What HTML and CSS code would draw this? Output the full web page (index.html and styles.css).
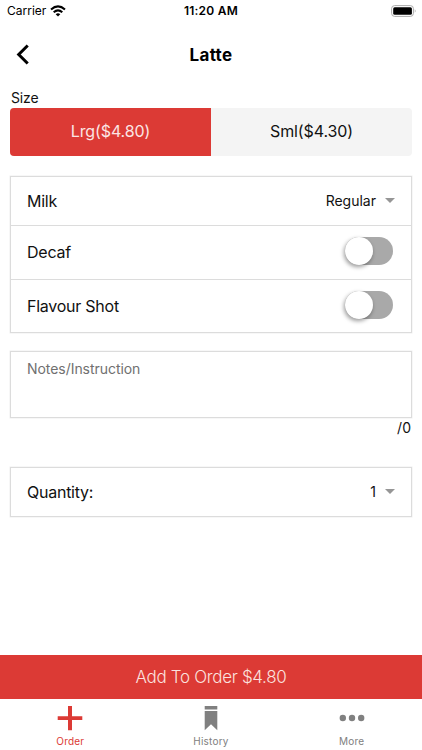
FILE: index.html
```html
<!DOCTYPE html>
<html lang="en">
<head>
<meta charset="utf-8">
<title>Latte</title>
<link rel="stylesheet" href="styles.css">
</head>
<body>
<div class="screen">
  <div class="status">
    <div class="carrier"><span>Carrier</span>
      <svg width="16" height="12" viewBox="0 0 16 12"><g fill="none" stroke="#000" stroke-width="2.1"><path d="M1 4.5Q8-1.6 15 4.5"/><path d="M3.7 7.3Q8 3.6 12.3 7.3"/></g><path d="M5.7 9.2Q8 7.3 10.3 9.2L8 11.5Z"/></svg>
    </div>
    <div class="time">11:20 AM</div>
    <svg class="battery" width="26" height="12" viewBox="0 0 26 12"><rect x=".6" y=".6" width="21.8" height="10.8" rx="3" fill="#fff" stroke="#aaa"/><rect x="2.2" y="2.2" width="18.7" height="7.6" rx="1.5"/><path d="M23.8 4.2q1.7 1.8 0 3.6z" fill="#999"/></svg>
  </div>
  <header class="header">
    <svg class="back" width="14" height="22" viewBox="0 0 14 22"><path d="M12.700 1.500L3.700 10.500l9 9" fill="none" stroke="#000" stroke-width="3"/></svg>
    <h1>Latte</h1>
  </header>
  <main class="content">
    <div class="label"><span>Size</span></div>
    <div class="segments">
      <div class="segment active"><span>Lrg($4.80)</span></div>
      <div class="segment"><span>Sml($4.30)</span></div>
    </div>
    <div class="card options">
      <div class="row"><span>Milk</span><span class="select"><span>Regular</span><i class="caret"></i></span></div>
      <div class="row tall"><span>Decaf</span><span class="switch"></span></div>
      <div class="row tall"><span>Flavour Shot</span><span class="switch"></span></div>
    </div>
    <div class="card notes"><span>Notes/Instruction</span></div>
    <div class="count"><span>/0</span></div>
    <div class="card quantity"><div class="row"><span>Quantity:</span><span class="select"><span>1</span><i class="caret"></i></span></div></div>
  </main>
  <div class="cta"><span>Add To Order $4.80</span></div>
  <nav class="tabs">
    <div class="tab on"><svg width="26" height="26" viewBox="0 0 26 26"><path d="M11 1h4v10.2h10.3v3.7H15v10.3h-4V14.900H.7v-3.700H11z"/></svg><span>Order</span></div>
    <div class="tab"><svg width="26" height="26" viewBox="0 0 26 26"><path d="M6.700 1h12.600v3.600H6.700zM6.700 6h12.600v19.200L13 19.200l-6.300 6z"/></svg><span>History</span></div>
    <div class="tab"><svg width="26" height="26" viewBox="0 0 26 26"><circle cx="3.800" cy="13" r="3.200"/><circle cx="13" cy="13" r="3.200"/><circle cx="22.200" cy="13" r="3.200"/></svg><span>More</span></div>
  </nav>
</div>
</body>
</html>
```
FILE: styles.css
```css
* { box-sizing: border-box; }
body { margin: 0; background: #fff; color: #111; font-family: Inter, "Liberation Sans", sans-serif; font-size: 16px; }
svg { display: block; }
.screen { width: 422px; height: 750px; display: flex; flex-direction: column; overflow: hidden; }
.status { height: 22px; display: grid; grid-template-columns: 1fr auto 1fr; align-items: center; padding: 0 5px 0 7px; font-size: 12px; line-height: 22px; color: #000; }
.carrier { display: flex; align-items: center; gap: 4px; }
.time { font-weight: 600; letter-spacing: .25px; margin-left: -2px; }
.battery { justify-self: end; }
.header { height: 66px; display: grid; grid-template-columns: 1fr auto 1fr; padding: 0 15px; align-items: center; }
.header h1 { margin: 0; font-size: 17px; font-weight: 700; line-height: 22px; letter-spacing: .3px; color: #000; }
.content { padding: 0 10px; flex: 1; }
.label { height: 20px; font-size: 14px; line-height: 20px; padding-left: 1px; letter-spacing: -.15px; }
.segments { display: grid; grid-template-columns: 1fr 1fr; height: 48px; border-radius: 4px; overflow: hidden; background: #f4f4f4; letter-spacing: -.1px; }
.segment { display: flex; align-items: center; justify-content: center; line-height: 46px; padding-bottom: 2px; }
.active { background: #dc3a35; color: #fbe5e4; }
.card { border: 1px solid #dcdcdc; box-shadow: 0 0 0 .5px #eee; letter-spacing: -.25px; }
.options { margin-top: 20px; height: 157px; }
.row { height: 48px; display: flex; align-items: center; justify-content: space-between; padding: 0 16px; }
.row.tall { height: 54px; border-top: 1px solid #dcdcdc; padding: 0 18px 2px 16px; }
.select { display: flex; align-items: center; gap: 9px; font-size: 14px; margin-top: -1px; letter-spacing: 0; }
.caret { border: 5px solid transparent; border-top-color: #969696; border-bottom: 0; }
.switch { width: 48px; height: 28px; border-radius: 14px; background: #a9a9a9; display: flex; margin-top: -1px; }
.switch::before { content: ""; width: 28px; height: 28px; border-radius: 50%; background: #fff; box-shadow: -1px 2px 4px #0006; }
.notes { height: 67px; margin-top: 18px; padding: 7px 16px; font-size: 14px; line-height: 20px; letter-spacing: -.05px; color: #707070; }
.count { height: 20px; text-align: right; font-size: 14px; line-height: 20px; padding-right: 1px; }
.quantity { margin-top: 29px; height: 50px; }
.cta { height: 44px; background: #dc3a35; color: #fbe1df; display: flex; align-items: center; justify-content: center; font-size: 17px; font-weight: 300; letter-spacing: -.33px; }
.tabs { height: 51px; display: grid; grid-template-columns: 1fr 1fr 1fr; }
.tab { display: flex; flex-direction: column; align-items: center; padding-top: 6px; font-size: 10px; line-height: 14px; gap: 3px; color: #808080; letter-spacing: .2px; }
.tab svg { fill: currentColor; }
.on { color: #dc3a35; }
```
